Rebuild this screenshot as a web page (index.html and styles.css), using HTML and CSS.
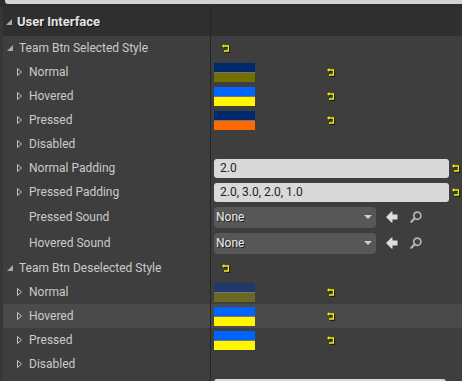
FILE: index.html
```html
<!DOCTYPE html>
<html lang="en">
<head>
    <meta charset="UTF-8">
    <meta name="viewport" content="width=device-width, initial-scale=1.0">
    <title>Details - User Interface</title>
    <link rel="stylesheet" href="styles.css">
</head>
<body>
    <!-- shared icons -->
    <svg class="defs" width="0" height="0">
        <symbol id="reset" viewBox="0 0 9 9">
            <g transform="translate(1 1)" fill="#151515" stroke="#151515">
                <path d="M1.8 2 H6.4 V7 H2" fill="none" stroke-width="1.3"/>
                <path d="M0 2 L2.2 0 V4 Z" stroke="none"/>
            </g>
            <g fill="#f4f400" stroke="#f4f400">
                <path d="M1.8 2 H6.4 V7 H2" fill="none" stroke-width="1.3"/>
                <path d="M0 2 L2.2 0 V4 Z" stroke="none"/>
            </g>
        </symbol>
        <symbol id="open" viewBox="0 0 6 6">
            <path d="M6 0 V6 H0 Z" fill="#a9a9a9"/>
        </symbol>
        <symbol id="closed" viewBox="0 0 5 8">
            <path d="M0.5 0.5 L4.5 4 L0.5 7.5 Z" fill="none" stroke="#c4c4c4" stroke-width="1"/>
        </symbol>
        <symbol id="use" viewBox="0 0 12 12">
            <path d="M0 6 L5.5 0.5 Q6.5 0 6.5 1 V3.5 H11.5 V8.5 H6.5 V11 Q6.5 12 5.5 11.5 Z" fill="#dedede"/>
        </symbol>
        <symbol id="find" viewBox="0 0 12 12">
            <circle cx="7.3" cy="4.7" r="3.6" fill="none" stroke="#b4b4b4" stroke-width="1.7"/>
            <path d="M4.8 7.3 L1.3 10.8" stroke="#b4b4b4" stroke-width="2.2" stroke-linecap="round"/>
        </symbol>
    </svg>

    <div class="top"><div class="search"></div></div>

    <div class="panel">
        <!-- Category -->
        <div class="row header">
            <div class="name"><svg class="tri-open"><use href="#open"/></svg>User Interface</div>
            <div class="value"></div>
        </div>

        <!-- Selected style -->
        <div class="row">
            <div class="name lvl1"><svg class="tri-open"><use href="#open"/></svg>Team Btn Selected Style</div>
            <div class="value"><svg class="reset first"><use href="#reset"/></svg></div>
        </div>
        <div class="row">
            <div class="name lvl2"><svg class="tri-closed"><use href="#closed"/></svg>Normal</div>
            <div class="value">
                <div class="swatch"><i class="navy"></i><i class="olive"></i></div>
                <svg class="reset"><use href="#reset"/></svg>
            </div>
        </div>
        <div class="row">
            <div class="name lvl2"><svg class="tri-closed"><use href="#closed"/></svg>Hovered</div>
            <div class="value">
                <div class="swatch"><i class="blue"></i><i class="yellow"></i></div>
                <svg class="reset"><use href="#reset"/></svg>
            </div>
        </div>
        <div class="row">
            <div class="name lvl2"><svg class="tri-closed"><use href="#closed"/></svg>Pressed</div>
            <div class="value">
                <div class="swatch"><i class="navy"></i><i class="orange"></i></div>
                <svg class="reset"><use href="#reset"/></svg>
            </div>
        </div>
        <div class="row">
            <div class="name lvl2"><svg class="tri-closed"><use href="#closed"/></svg>Disabled</div>
            <div class="value"></div>
        </div>
        <div class="row">
            <div class="name lvl2"><svg class="tri-closed"><use href="#closed"/></svg>Normal Padding</div>
            <div class="value">
                <div class="field">2.0</div>
                <svg class="reset"><use href="#reset"/></svg>
            </div>
        </div>
        <div class="row">
            <div class="name lvl2"><svg class="tri-closed"><use href="#closed"/></svg>Pressed Padding</div>
            <div class="value">
                <div class="field">2.0, 3.0, 2.0, 1.0</div>
                <svg class="reset"><use href="#reset"/></svg>
            </div>
        </div>
        <div class="row tall">
            <div class="name lvl2 leaf">Pressed Sound</div>
            <div class="value">
                <div class="combo">None<span class="caret"></span></div>
                <svg class="btn-use"><use href="#use"/></svg>
                <svg class="btn-find"><use href="#find"/></svg>
            </div>
        </div>
        <div class="row tall">
            <div class="name lvl2 leaf">Hovered Sound</div>
            <div class="value">
                <div class="combo">None<span class="caret"></span></div>
                <svg class="btn-use"><use href="#use"/></svg>
                <svg class="btn-find"><use href="#find"/></svg>
            </div>
        </div>

        <!-- Deselected style -->
        <div class="row">
            <div class="name lvl1"><svg class="tri-open"><use href="#open"/></svg>Team Btn Deselected Style</div>
            <div class="value"><svg class="reset first"><use href="#reset"/></svg></div>
        </div>
        <div class="row">
            <div class="name lvl2"><svg class="tri-closed"><use href="#closed"/></svg>Normal</div>
            <div class="value">
                <div class="swatch"><i class="navy-dim"></i><i class="olive-dim"></i></div>
                <svg class="reset"><use href="#reset"/></svg>
            </div>
        </div>
        <div class="row hover">
            <div class="name lvl2"><svg class="tri-closed"><use href="#closed"/></svg>Hovered</div>
            <div class="value">
                <div class="swatch"><i class="blue"></i><i class="yellow"></i></div>
                <svg class="reset"><use href="#reset"/></svg>
            </div>
        </div>
        <div class="row">
            <div class="name lvl2"><svg class="tri-closed"><use href="#closed"/></svg>Pressed</div>
            <div class="value">
                <div class="swatch"><i class="blue"></i><i class="yellow"></i></div>
                <svg class="reset"><use href="#reset"/></svg>
            </div>
        </div>
        <div class="row">
            <div class="name lvl2"><svg class="tri-closed"><use href="#closed"/></svg>Disabled</div>
            <div class="value"></div>
        </div>
        <!-- next row, only the top of its field is in view -->
        <div class="row">
            <div class="name lvl2"></div>
            <div class="value top-aligned">
                <div class="field"></div>
            </div>
        </div>
    </div>
</body>
</html>
```

FILE: styles.css
```css
body {
    margin: 0;
    height: 381px;
    overflow: hidden;
    background: #373737;
    font-family: Roboto, 'Noto Sans', sans-serif;
    font-size: 12px;
    color: #cbcbcb;
}
.defs {
    position: absolute;
}
.top {
    height: 7px;
    background: #2c2c2c;
}
.search {
    height: 4px;
    margin-left: 5px;
    background: #d2d2d2;
    border-bottom-left-radius: 3px;
}
.panel {
    margin-left: 3px;
}
.row {
    display: flex;
    height: 24px;
    background: #3e3e3e;
}
.row.tall {
    height: 26px;
}
.row.hover {
    background: #4a4a4a;
}
.row.header {
    height: 29px;
    background: #2f2f2f;
}
.name {
    width: 208px;
    flex: none;
    box-sizing: border-box;
    border-right: 1px solid #242424;
    display: flex;
    align-items: center;
    white-space: nowrap;
}
.value {
    flex: 1;
    display: flex;
    align-items: center;
    padding-left: 3px;
    padding-right: 1px;
}
.value.top-aligned {
    align-items: flex-start;
    padding-top: 3px;
    padding-right: 13px;
}
.header .name {
    padding-left: 3px;
    font-size: 13px;
    font-weight: bold;
    color: #e4e4e4;
    text-shadow: 1px 1px 0 #151515;
}
.header .tri-open {
    margin-right: 5px;
}
.tri-open {
    width: 6px;
    height: 6px;
    margin-right: 6px;
}
.tri-closed {
    width: 5px;
    height: 8px;
    margin-right: 7px;
}
.lvl1 {
    padding-left: 4px;
}
.lvl2 {
    padding-left: 14px;
}
.lvl2.leaf {
    padding-left: 26px;
}
.reset {
    width: 9px;
    height: 9px;
    flex: none;
}
.reset.first {
    margin-left: 8px;
}
.swatch {
    width: 41px;
    height: 19px;
    margin-right: 72px;
    display: flex;
    flex-direction: column;
    gap: 1px;
    background: #6f7382;
}
.swatch i {
    flex: 1;
}
.navy { background: #002a6c; }
.olive { background: #727000; }
.blue { background: #0064ff; }
.yellow { background: #fff600; }
.orange { background: #ff6a00; }
.navy-dim { background: #1f3a6a; }
.olive-dim { background: #6a6822; }
.field {
    flex: 1;
    height: 19px;
    margin-right: 3px;
    padding-left: 6px;
    border-radius: 3px;
    background: #d9d9d9;
    color: #1e1e1e;
    display: flex;
    align-items: center;
}
.combo {
    width: 162px;
    height: 21px;
    box-sizing: border-box;
    padding: 0 4px 0 2px;
    border-radius: 4px;
    background: #575757;
    color: #ececec;
    text-shadow: 1px 1px 0 #202020;
    display: flex;
    align-items: center;
    justify-content: space-between;
}
.caret {
    width: 0;
    height: 0;
    border-left: 4px solid transparent;
    border-right: 4px solid transparent;
    border-top: 4px solid #cdcdcd;
}
.btn-use {
    width: 12px;
    height: 12px;
    margin-left: 10px;
}
.btn-find {
    width: 12px;
    height: 12px;
    margin-left: 12px;
}
```
